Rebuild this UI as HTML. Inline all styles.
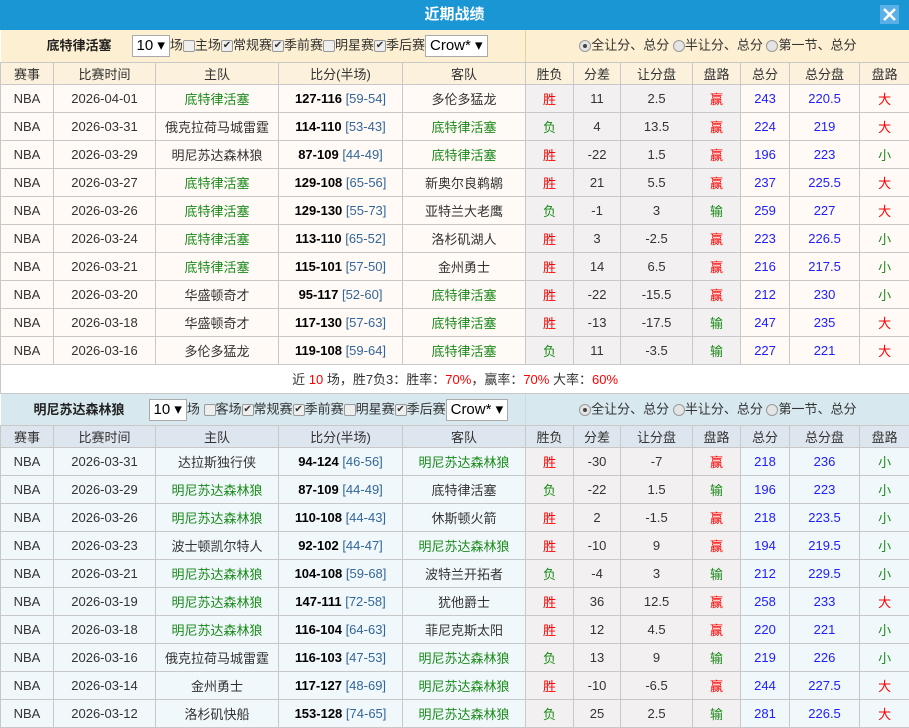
<!DOCTYPE html>
<html><head><meta charset="utf-8"><style>
*{margin:0;padding:0;box-sizing:border-box}
body{width:909px;height:728px;overflow:hidden;background:#fff;font-family:"Liberation Sans","Noto Sans CJK SC",sans-serif;font-size:13px;color:#333;position:relative}
.title{height:30px;background:#1a96d4;color:#fff;font-weight:bold;font-size:15px;text-align:center;line-height:30px;position:relative}
.close{position:absolute;right:10px;top:5px;width:19px;height:19px;background:#5ab0e6;}
table{border-collapse:collapse;table-layout:fixed;width:909px}
td{border:1px solid #c8c8c8;text-align:center;height:28px;white-space:nowrap;overflow:hidden}
.ctl td{height:32px;border:none;border-bottom:1px solid #c8c8c8;line-height:28px;vertical-align:middle}
.ctl td *{vertical-align:middle}
.ctl td.l{border-right:1px solid #e3cfa0;text-align:left}
.t1 .ctl td{background:#fdefd2}
.t2 .ctl td{background:#d7e9ef}
.t2 .ctl td.l{border-right-color:#c5dde5}
.hd td{height:22px}
.t1 .hd td{background:#fbf1dc}
.t2 .hd td{background:#dde6ee}
.t1 .r0 td{background:#fffaf5}
.t2 .r0 td{background:#f0f8fb}
.r0 td.x{background:#f2f0f0}
.g{color:#1a8a1a}.r{color:#f00}.b{color:#2020ff}.h{color:#336699}
.sel{display:inline-block;border:1px solid #aaa;background:#fff;height:22px;line-height:20px;padding:0 4px;font-size:15px;color:#000}
.cb{display:inline-block;width:12px;height:12px;border:1px solid #999;border-radius:2px;background:#eee;font-size:10px;line-height:10px;text-align:center}
.rd{display:inline-block;width:12px;height:12px;border:1px solid #999;border-radius:50%;background:#e4e4e4;position:relative}
.rd.on:after{content:"";position:absolute;left:3px;top:3px;width:4px;height:4px;border-radius:50%;background:#444}
.sum td{height:29px;background:#fff}
</style></head><body>
<div class="title">近期战绩<div class="close"><svg width="19" height="19"><path d="M4 4L15 15M15 4L4 15" stroke="#fff" stroke-width="2.5"/></svg></div></div>
<table class="t1">
<colgroup><col width="53"><col width="102"><col width="123"><col width="124"><col width="123"><col width="48"><col width="47"><col width="72"><col width="48"><col width="49"><col width="70"><col width="50"></colgroup>
<tr class="ctl"><td colspan="5" class="l"><b style="margin-left:46px;color:#222">底特律活塞</b><span style="margin-left:20px"></span><span class="sel">10 ▾</span><span>场</span><span class="cb"></span><span>主场</span><span class="cb">✔</span><span>常规赛</span><span class="cb">✔</span><span>季前赛</span><span class="cb"></span><span>明星赛</span><span class="cb">✔</span><span>季后赛</span><span class="sel">Crow* ▾</span></td><td colspan="7"><span class="rd on"></span><span>全让分、总分</span> <span class="rd"></span><span>半让分、总分</span> <span class="rd"></span><span>第一节、总分</span></td></tr>
<tr class="hd"><td>赛事</td><td>比赛时间</td><td>主队</td><td>比分(半场)</td><td>客队</td><td>胜负</td><td>分差</td><td>让分盘</td><td>盘路</td><td>总分</td><td>总分盘</td><td>盘路</td></tr>
<tr class="r0"><td>NBA</td><td>2026-04-01</td><td class="g">底特律活塞</td><td><b style="color:#000">127-116</b> <span class="h">[59-54]</span></td><td>多伦多猛龙</td><td class="x r">胜</td><td class="x">11</td><td class="x">2.5</td><td class="x r">赢</td><td class="b">243</td><td class="b">220.5</td><td class="r">大</td></tr>
<tr class="r0"><td>NBA</td><td>2026-03-31</td><td>俄克拉荷马城雷霆</td><td><b style="color:#000">114-110</b> <span class="h">[53-43]</span></td><td class="g">底特律活塞</td><td class="x g">负</td><td class="x">4</td><td class="x">13.5</td><td class="x r">赢</td><td class="b">224</td><td class="b">219</td><td class="r">大</td></tr>
<tr class="r0"><td>NBA</td><td>2026-03-29</td><td>明尼苏达森林狼</td><td><b style="color:#000">87-109</b> <span class="h">[44-49]</span></td><td class="g">底特律活塞</td><td class="x r">胜</td><td class="x">-22</td><td class="x">1.5</td><td class="x r">赢</td><td class="b">196</td><td class="b">223</td><td class="g">小</td></tr>
<tr class="r0"><td>NBA</td><td>2026-03-27</td><td class="g">底特律活塞</td><td><b style="color:#000">129-108</b> <span class="h">[65-56]</span></td><td>新奥尔良鹈鹕</td><td class="x r">胜</td><td class="x">21</td><td class="x">5.5</td><td class="x r">赢</td><td class="b">237</td><td class="b">225.5</td><td class="r">大</td></tr>
<tr class="r0"><td>NBA</td><td>2026-03-26</td><td class="g">底特律活塞</td><td><b style="color:#000">129-130</b> <span class="h">[55-73]</span></td><td>亚特兰大老鹰</td><td class="x g">负</td><td class="x">-1</td><td class="x">3</td><td class="x g">输</td><td class="b">259</td><td class="b">227</td><td class="r">大</td></tr>
<tr class="r0"><td>NBA</td><td>2026-03-24</td><td class="g">底特律活塞</td><td><b style="color:#000">113-110</b> <span class="h">[65-52]</span></td><td>洛杉矶湖人</td><td class="x r">胜</td><td class="x">3</td><td class="x">-2.5</td><td class="x r">赢</td><td class="b">223</td><td class="b">226.5</td><td class="g">小</td></tr>
<tr class="r0"><td>NBA</td><td>2026-03-21</td><td class="g">底特律活塞</td><td><b style="color:#000">115-101</b> <span class="h">[57-50]</span></td><td>金州勇士</td><td class="x r">胜</td><td class="x">14</td><td class="x">6.5</td><td class="x r">赢</td><td class="b">216</td><td class="b">217.5</td><td class="g">小</td></tr>
<tr class="r0"><td>NBA</td><td>2026-03-20</td><td>华盛顿奇才</td><td><b style="color:#000">95-117</b> <span class="h">[52-60]</span></td><td class="g">底特律活塞</td><td class="x r">胜</td><td class="x">-22</td><td class="x">-15.5</td><td class="x r">赢</td><td class="b">212</td><td class="b">230</td><td class="g">小</td></tr>
<tr class="r0"><td>NBA</td><td>2026-03-18</td><td>华盛顿奇才</td><td><b style="color:#000">117-130</b> <span class="h">[57-63]</span></td><td class="g">底特律活塞</td><td class="x r">胜</td><td class="x">-13</td><td class="x">-17.5</td><td class="x g">输</td><td class="b">247</td><td class="b">235</td><td class="r">大</td></tr>
<tr class="r0"><td>NBA</td><td>2026-03-16</td><td>多伦多猛龙</td><td><b style="color:#000">119-108</b> <span class="h">[59-64]</span></td><td class="g">底特律活塞</td><td class="x g">负</td><td class="x">11</td><td class="x">-3.5</td><td class="x g">输</td><td class="b">227</td><td class="b">221</td><td class="r">大</td></tr>
<tr class="sum"><td colspan="12">近 <span class="r">10</span> 场，胜7负3：胜率：<span class="r">70%</span>，赢率：<span class="r">70%</span> 大率：<span class="r">60%</span></td></tr>
</table>
<table class="t2">
<colgroup><col width="53"><col width="102"><col width="123"><col width="124"><col width="123"><col width="48"><col width="47"><col width="72"><col width="48"><col width="49"><col width="70"><col width="50"></colgroup>
<tr class="ctl"><td colspan="5" class="l"><b style="margin-left:33px;color:#222">明尼苏达森林狼</b><span style="margin-left:24px"></span><span class="sel">10 ▾</span><span>场 </span><span class="cb"></span><span>客场</span><span class="cb">✔</span><span>常规赛</span><span class="cb">✔</span><span>季前赛</span><span class="cb"></span><span>明星赛</span><span class="cb">✔</span><span>季后赛</span><span class="sel">Crow* ▾</span></td><td colspan="7"><span class="rd on"></span><span>全让分、总分</span> <span class="rd"></span><span>半让分、总分</span> <span class="rd"></span><span>第一节、总分</span></td></tr>
<tr class="hd"><td>赛事</td><td>比赛时间</td><td>主队</td><td>比分(半场)</td><td>客队</td><td>胜负</td><td>分差</td><td>让分盘</td><td>盘路</td><td>总分</td><td>总分盘</td><td>盘路</td></tr>
<tr class="r0"><td>NBA</td><td>2026-03-31</td><td>达拉斯独行侠</td><td><b style="color:#000">94-124</b> <span class="h">[46-56]</span></td><td class="g">明尼苏达森林狼</td><td class="x r">胜</td><td class="x">-30</td><td class="x">-7</td><td class="x r">赢</td><td class="b">218</td><td class="b">236</td><td class="g">小</td></tr>
<tr class="r0"><td>NBA</td><td>2026-03-29</td><td class="g">明尼苏达森林狼</td><td><b style="color:#000">87-109</b> <span class="h">[44-49]</span></td><td>底特律活塞</td><td class="x g">负</td><td class="x">-22</td><td class="x">1.5</td><td class="x g">输</td><td class="b">196</td><td class="b">223</td><td class="g">小</td></tr>
<tr class="r0"><td>NBA</td><td>2026-03-26</td><td class="g">明尼苏达森林狼</td><td><b style="color:#000">110-108</b> <span class="h">[44-43]</span></td><td>休斯顿火箭</td><td class="x r">胜</td><td class="x">2</td><td class="x">-1.5</td><td class="x r">赢</td><td class="b">218</td><td class="b">223.5</td><td class="g">小</td></tr>
<tr class="r0"><td>NBA</td><td>2026-03-23</td><td>波士顿凯尔特人</td><td><b style="color:#000">92-102</b> <span class="h">[44-47]</span></td><td class="g">明尼苏达森林狼</td><td class="x r">胜</td><td class="x">-10</td><td class="x">9</td><td class="x r">赢</td><td class="b">194</td><td class="b">219.5</td><td class="g">小</td></tr>
<tr class="r0"><td>NBA</td><td>2026-03-21</td><td class="g">明尼苏达森林狼</td><td><b style="color:#000">104-108</b> <span class="h">[59-68]</span></td><td>波特兰开拓者</td><td class="x g">负</td><td class="x">-4</td><td class="x">3</td><td class="x g">输</td><td class="b">212</td><td class="b">229.5</td><td class="g">小</td></tr>
<tr class="r0"><td>NBA</td><td>2026-03-19</td><td class="g">明尼苏达森林狼</td><td><b style="color:#000">147-111</b> <span class="h">[72-58]</span></td><td>犹他爵士</td><td class="x r">胜</td><td class="x">36</td><td class="x">12.5</td><td class="x r">赢</td><td class="b">258</td><td class="b">233</td><td class="r">大</td></tr>
<tr class="r0"><td>NBA</td><td>2026-03-18</td><td class="g">明尼苏达森林狼</td><td><b style="color:#000">116-104</b> <span class="h">[64-63]</span></td><td>菲尼克斯太阳</td><td class="x r">胜</td><td class="x">12</td><td class="x">4.5</td><td class="x r">赢</td><td class="b">220</td><td class="b">221</td><td class="g">小</td></tr>
<tr class="r0"><td>NBA</td><td>2026-03-16</td><td>俄克拉荷马城雷霆</td><td><b style="color:#000">116-103</b> <span class="h">[47-53]</span></td><td class="g">明尼苏达森林狼</td><td class="x g">负</td><td class="x">13</td><td class="x">9</td><td class="x g">输</td><td class="b">219</td><td class="b">226</td><td class="g">小</td></tr>
<tr class="r0"><td>NBA</td><td>2026-03-14</td><td>金州勇士</td><td><b style="color:#000">117-127</b> <span class="h">[48-69]</span></td><td class="g">明尼苏达森林狼</td><td class="x r">胜</td><td class="x">-10</td><td class="x">-6.5</td><td class="x r">赢</td><td class="b">244</td><td class="b">227.5</td><td class="r">大</td></tr>
<tr class="r0"><td>NBA</td><td>2026-03-12</td><td>洛杉矶快船</td><td><b style="color:#000">153-128</b> <span class="h">[74-65]</span></td><td class="g">明尼苏达森林狼</td><td class="x g">负</td><td class="x">25</td><td class="x">2.5</td><td class="x g">输</td><td class="b">281</td><td class="b">226.5</td><td class="r">大</td></tr>
</table>
</body></html>
